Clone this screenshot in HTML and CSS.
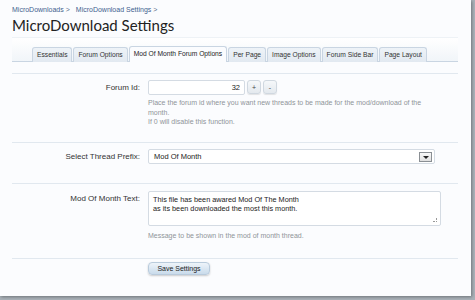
FILE: index.html
```html
<!DOCTYPE html>
<html lang="en">
<head>
  <meta charset="UTF-8" />
  <title>MicroDownload Settings</title>
  <link rel="stylesheet" href="styles.css">
</head>
<body>
  <div class="page">

    <!-- Breadcrumb and title -->
    <div class="crumbs">
      <span class="crumb"><a href="#">MicroDownloads</a> &gt;</span>
      <span class="crumb"><a href="#">MicroDownload Settings</a> &gt;</span>
    </div>
    <h1 class="title">MicroDownload Settings</h1>

    <!-- Tabs -->
    <div class="tabs">
      <div class="tab">Essentials</div>
      <div class="tab">Forum Options</div>
      <div class="tab active">Mod Of Month Forum Options</div>
      <div class="tab">Per Page</div>
      <div class="tab">Image Options</div>
      <div class="tab">Forum Side Bar</div>
      <div class="tab">Page Layout</div>
    </div>

    <!-- Form rows -->
    <div class="row row-id">
      <label class="label">Forum Id:</label>
      <div class="field">
        <div class="spin">
          <input class="num" type="text" value="32">
          <button class="spin-btn">+</button>
          <button class="spin-btn">-</button>
        </div>
        <p class="hint">Place the forum id where you want new threads to be made for the mod/download of the month.<br>If 0 will disable this function.</p>
      </div>
    </div>

    <div class="row row-prefix">
      <label class="label">Select Thread Prefix:</label>
      <div class="field">
        <div class="select">
          <span>Mod Of Month</span>
          <span class="arrow"></span>
        </div>
      </div>
    </div>

    <div class="row row-text">
      <label class="label">Mod Of Month Text:</label>
      <div class="field">
        <div class="textarea">This file has been awared Mod Of The Month<br>as its been downloaded the most this month.<span class="grip"></span></div>
        <p class="hint">Message to be shown in the mod of month thread.</p>
      </div>
    </div>

    <div class="row row-submit">
      <div class="label"></div>
      <div class="field">
        <button class="save">Save Settings</button>
      </div>
    </div>

  </div>
</body>
</html>
```

FILE: styles.css
```css
/* Basic reset */
* {
  box-sizing: border-box;
  margin: 0;
  padding: 0;
}
body {
  font-family: "Liberation Sans", Arial, sans-serif;
  background: #a9b1b8;
  color: #333;
  width: 475px;
  height: 300px;
  overflow: hidden;
}

/* Main white panel */
.page {
  width: 471px;
  height: 296px;
  background: #fbfcfe;
  box-shadow: 1px 1px 3px rgba(0,0,0,0.35);
  padding-top: 5px;
}

/* Breadcrumb */
.crumbs {
  font-size: 7px;
  color: #5a6f88;
  padding-left: 12px;
  height: 9px;
  line-height: 9px;
  display: flex;
  gap: 6px;
}
.crumbs a {
  color: #3f5f8f;
  text-decoration: none;
}

/* Page title */
.title {
  font-family: Lato, sans-serif;
  font-weight: 400;
  font-size: 15px;
  color: #222;
  padding-left: 12px;
  height: 23px;
  line-height: 22px;
}

/* Tabs */
.tabs {
  margin: 0 13px 0 12px;
  padding: 9px 0 0 20px;
  height: 25px;
  display: flex;
  align-items: flex-end;
  border-top: 1px solid #eef2f6;
  border-bottom: 1px solid #c9d5e2;
  background: linear-gradient(#ffffff, #f1f5f9);
}
.tab {
  font-size: 6.7px;
  color: #333;
  height: 15px;
  line-height: 14px;
  padding: 0 4px;
  margin-right: 1px;
  border: 1px solid #c9d5e2;
  border-bottom: none;
  border-radius: 3px 3px 0 0;
  background: linear-gradient(#eef3f8, #e2e9f1);
  margin-bottom: -1px;
}
.tab.active {
  background: #fbfcfe;
  height: 16px;
  color: #222;
}

/* Form rows */
.row {
  display: flex;
  margin: 0 13px 0 12px;
  border-top: 1px solid #e1e8ef;
}
.row-id {
  margin-top: 11px;
  padding-top: 6px;
  height: 69px;
}
.row-prefix {
  padding-top: 6px;
  height: 41px;
}
.row-text {
  padding-top: 7px;
  height: 75px;
}
.row-submit {
  padding-top: 3px;
}
.label {
  width: 128px;
  text-align: right;
  font-size: 8px;
  color: #333;
  line-height: 15px;
  flex-shrink: 0;
}
.field {
  margin-left: 8px;
  flex: 1;
}

/* Forum id spinner */
.spin {
  display: flex;
  gap: 2px;
  height: 15px;
}
.num {
  width: 97px;
  height: 15px;
  border: 1px solid #d4dbe3;
  border-radius: 2px;
  font-family: inherit;
  font-size: 7.5px;
  text-align: right;
  padding-right: 4px;
  background: #fff;
  color: #222;
}
.spin-btn {
  width: 14px;
  height: 14px;
  font-size: 7px;
  font-family: inherit;
  color: #444;
  border: 1px solid #d0d8e0;
  border-radius: 3px;
  background: linear-gradient(#f6f8fa, #e4e9ee);
  box-shadow: 0 1px 1px rgba(0,0,0,0.1);
}

/* Hint text */
.hint {
  font-size: 7px;
  color: #8f9499;
  line-height: 9.5px;
  margin-top: 3px;
  width: 285px;
}

/* Select box */
.select {
  width: 287px;
  height: 15px;
  border: 1px solid #d4dbe3;
  border-radius: 2px;
  background: #fff;
  display: flex;
  align-items: center;
  justify-content: space-between;
  padding: 0 2px 0 5px;
  font-size: 7.5px;
  color: #222;
}
.arrow {
  width: 13px;
  height: 10px;
  border: 1px solid #8a8f94;
  background: linear-gradient(#f8f8f8, #e0e0e0);
  position: relative;
}
.arrow::after {
  content: "";
  position: absolute;
  left: 3px;
  top: 3px;
  border-left: 3px solid transparent;
  border-right: 3px solid transparent;
  border-top: 3px solid #222;
}

/* Textarea */
.textarea {
  width: 293px;
  height: 35px;
  border: 1px solid #d4dbe3;
  border-radius: 2px;
  background: #fff;
  font-size: 7.3px;
  line-height: 9px;
  color: #222;
  padding: 3px 4px;
  position: relative;
}
.grip {
  position: absolute;
  right: 3px;
  bottom: 3px;
  width: 4px;
  height: 4px;
  border-right: 1px dotted #999;
  border-bottom: 1px dotted #999;
}
.row-text .hint {
  margin-top: 5px;
}

/* Save button */
.save {
  display: block;
  width: 62px;
  height: 13px;
  font-family: inherit;
  font-size: 7px;
  color: #222;
  border: 1px solid #b9cbdc;
  border-radius: 4px;
  background: linear-gradient(#eef4fa, #c9dbeb);
  box-shadow: 0 1px 2px rgba(0,0,0,0.2);
}
```
